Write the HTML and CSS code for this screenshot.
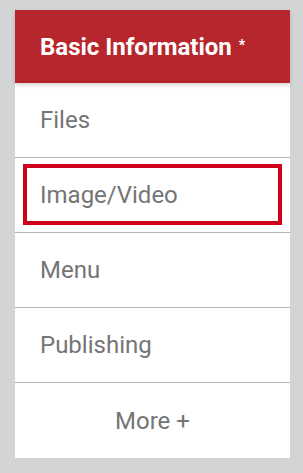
FILE: index.html
```html
<!DOCTYPE html>
<html>
<head>
<meta charset="utf-8">
<link rel="stylesheet" href="styles.css">
</head>
<body>
<nav class="menu">
  <div class="head">Basic Information <span class="req">*</span></div>
  <div class="item">Files</div>
  <div class="item"><span class="box">Image/Video</span></div>
  <div class="item">Menu</div>
  <div class="item">Publishing</div>
  <div class="item more">More +</div>
</nav>
</body>
</html>
```
FILE: styles.css
```css
html, body {
  margin: 0;
  padding: 0;
  background: #d3d4d6;
}
body {
  padding: 10px 13px 15px 15px;
  font-family: Roboto, "Liberation Sans", sans-serif;
}
.menu {
  background: #fff;
  width: 275px;
  display: flex;
  flex-direction: column;
}
.head {
  background: #b8262d;
  color: #fff;
  font-weight: 700;
  font-size: 24px;
  height: 73px;
  display: flex;
  align-items: center;
  padding-left: 25px;
  box-shadow: 0 2px 4px rgba(0,0,0,0.18);
  position: relative;
  z-index: 1;
}
.req {
  font-size: 14px;
  margin-left: 7px;
  align-self: flex-start;
  margin-top: 27px;
}
.item {
  height: 74px;
  border-bottom: 1px solid #b5b5b5;
  display: flex;
  align-items: center;
  padding-left: 25px;
  color: #757575;
  font-size: 24px;
}
.item:last-child {
  border-bottom: none;
  height: 75px;
  justify-content: center;
  padding-left: 0;
}
.box {
  flex: 1;
  align-self: stretch;
  margin: 6px 8px 7px -17px;
  border: 4px solid #d0021b;
  display: flex;
  align-items: center;
  padding-left: 13px;
}
```
